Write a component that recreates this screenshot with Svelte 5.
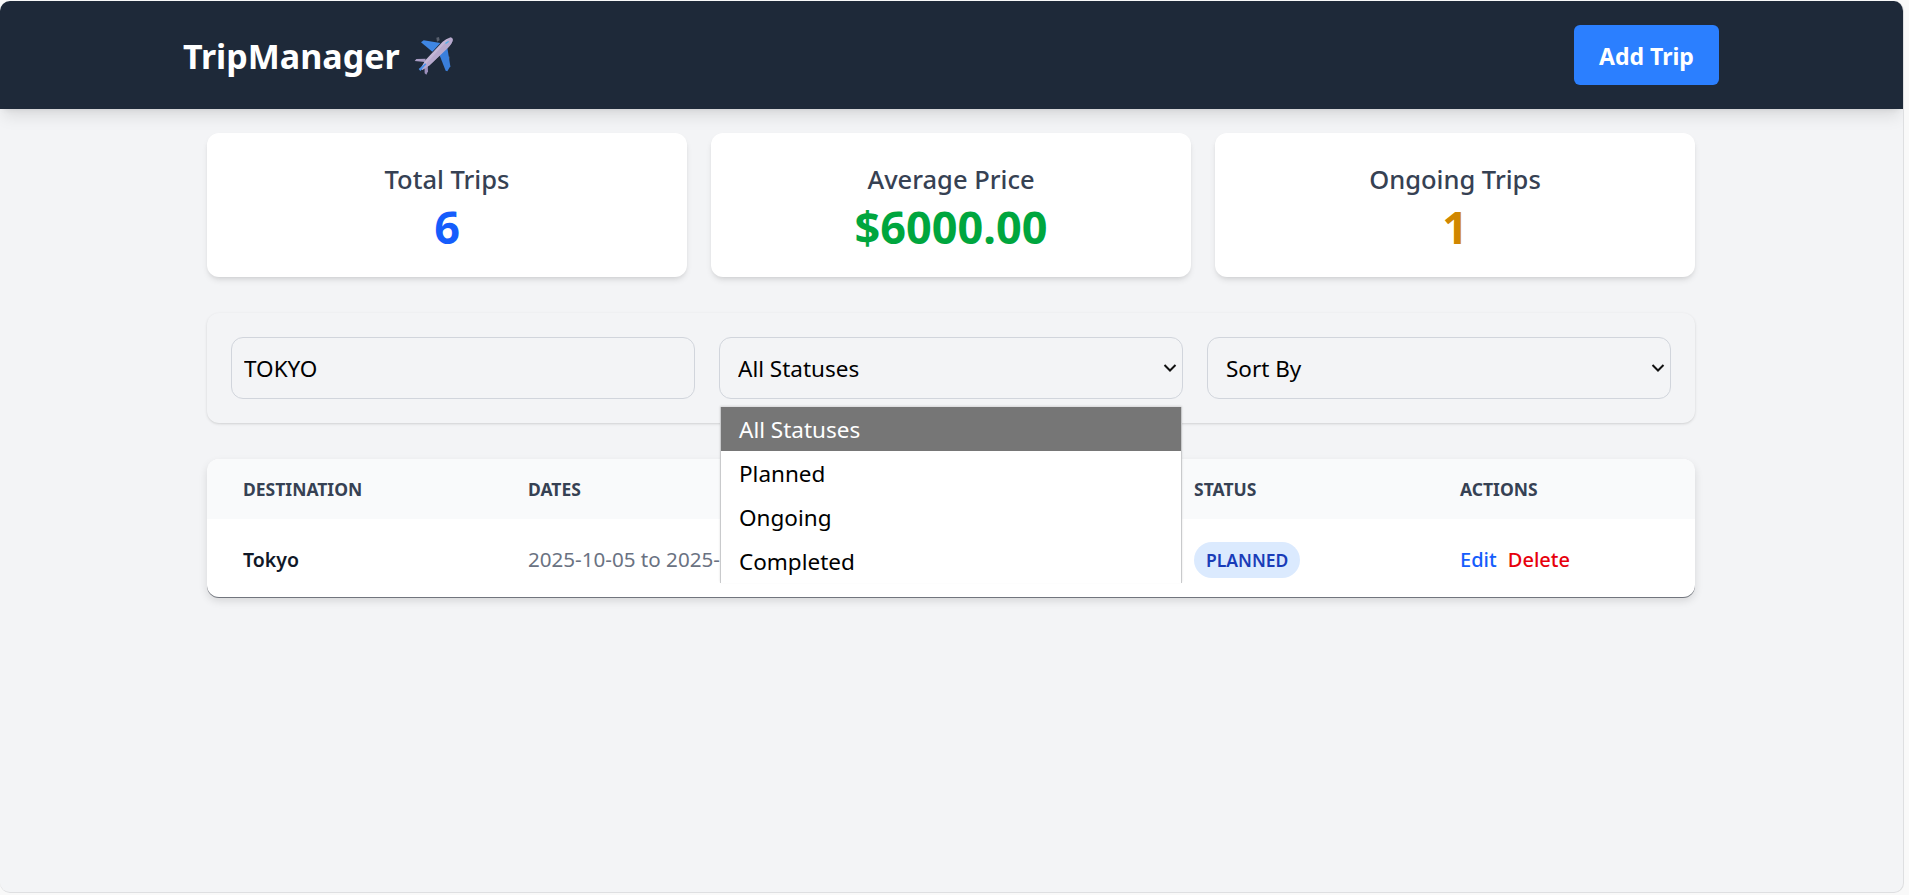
<script>
  const stats = [
    { label: 'Total Trips', value: '6', tone: 'blue' },
    { label: 'Average Price', value: '$6000.00', tone: 'green' },
    { label: 'Ongoing Trips', value: '1', tone: 'amber' }
  ];
  const statusOptions = ['All Statuses', 'Planned', 'Ongoing', 'Completed'];
</script>

<div class="window">
  <header class="topbar">
    <div class="topbar-inner">
      <div class="logo">
        <span class="logo-text">TripManager</span>
        <svg class="plane" viewBox="0 0 144 138" width="48" height="46" aria-hidden="true">
          <path d="M82 14l8-2 2 10-8 4z" fill="#59606e" />
          <path d="M113 70l9 1-1 9-9-2z" fill="#59606e" />
          <path d="M36 28l8-6 50 8-24 26z" fill="#3f86e3" />
          <path d="M90 62l24-24 10 62-9 15-5-2z" fill="#3a7fdc" />
          <path d="M17 84l5-6 28-1-2 10z" fill="#a99cc4" />
          <path d="M46 88l10 1 1 26-5 10-5-4z" fill="#9c8fbb" />
          <path d="M122 14c6-2 11 3 9 9-2 7-7 14-14 21L62 97l-22 14-5-5 14-24L101 26c7-6 14-10 21-12z" fill="#c4b6d6" />
          <path d="M122 14c6-2 11 3 9 9-2 7-7 14-14 21L62 97l-22 14-3-3z" fill="#ad9fc6" opacity="0.55" />
          <path d="M108 30l10-6 2 2-9 7z" fill="#4cb2ee" />
          <path d="M29 108l20-17 3 3-18 20z" fill="#4a90ea" />
        </svg>
      </div>
      <button class="add-btn" type="button">Add Trip</button>
    </div>
  </header>

  <main class="content">
    <section class="stats">
      {#each stats as stat}
        <div class="stat-card">
          <h3>{stat.label}</h3>
          <p class={stat.tone}>{stat.value}</p>
        </div>
      {/each}
    </section>

    <section class="filters">
      <input class="field" type="text" value="TOKYO" />
      <div class="select-wrap">
        <select class="field pick">
          {#each statusOptions as option}
            <option>{option}</option>
          {/each}
        </select>
        <svg class="chevron" viewBox="0 0 14 10" width="14" height="10" aria-hidden="true">
          <path d="M1.5 2l5.5 5.5L12.5 2" fill="none" stroke="#111" stroke-width="2" />
        </svg>
        <ul class="menu">
          {#each statusOptions as option, i}
            <li class:active={i === 0}>{option}</li>
          {/each}
        </ul>
      </div>
      <div class="select-wrap">
        <select class="field pick">
          <option>Sort By</option>
        </select>
        <svg class="chevron" viewBox="0 0 14 10" width="14" height="10" aria-hidden="true">
          <path d="M1.5 2l5.5 5.5L12.5 2" fill="none" stroke="#111" stroke-width="2" />
        </svg>
      </div>
    </section>

    <section class="table-card">
      <table>
        <colgroup>
          <col style="width: 285px" />
          <col style="width: 370px" />
          <col style="width: 296px" />
          <col style="width: 266px" />
          <col />
        </colgroup>
        <thead>
          <tr>
            <th>Destination</th>
            <th>Dates</th>
            <th>Price</th>
            <th>Status</th>
            <th>Actions</th>
          </tr>
        </thead>
        <tbody>
          <tr>
            <td class="dest">Tokyo</td>
            <td class="muted">2025-10-05 to 2025-10-12</td>
            <td class="muted">$6000.00</td>
            <td class="badge-cell"><span class="badge">Planned</span></td>
            <td class="actions">
              <span class="edit">Edit</span>
              <span class="delete">Delete</span>
            </td>
          </tr>
        </tbody>
      </table>
    </section>
  </main>
</div>

<style>
  :global(body) {
    background: #f9f9f9;
    font-family: "Noto Sans", "Open Sans", sans-serif;
  }

  .window {
    width: 1904px;
    height: 892px;
    margin-top: 1px;
    box-sizing: border-box;
    background: #f3f4f6;
    border-right: 1px solid #dedfe1;
    border-bottom: 1px solid #dedfe1;
    border-radius: 10px;
    overflow: hidden;
  }

  .topbar {
    height: 108px;
    background: #1e2939;
    box-shadow: 0 10px 15px -3px rgba(0, 0, 0, 0.1), 0 4px 6px -4px rgba(0, 0, 0, 0.1);
  }

  .topbar-inner {
    width: 1536px;
    height: 100%;
    margin-left: 183px;
    display: flex;
    align-items: center;
    justify-content: space-between;
  }

  .logo {
    display: flex;
    align-items: center;
    gap: 14px;
    color: #fff;
    font-size: 34px;
    font-weight: 700;
  }

  .logo-text {
    padding-top: 2px;
  }

  .plane {
    display: block;
    margin-left: -5px;
    margin-top: 2px;
  }

  .add-btn {
    width: 145px;
    height: 60px;
    padding: 2px 0 0;
    border: none;
    border-radius: 6px;
    background: #2b7fff;
    color: #fff;
    font: inherit;
    font-size: 23px;
    font-weight: 700;
  }

  .content {
    width: 1488px;
    margin-left: 207px;
  }

  .stats {
    display: grid;
    grid-template-columns: repeat(3, 1fr);
    gap: 24px;
    padding-top: 24px;
  }

  .stat-card {
    height: 144px;
    box-sizing: border-box;
    padding-top: 28px;
    background: #fff;
    border-radius: 12px;
    box-shadow: 0 4px 6px -1px rgba(0, 0, 0, 0.1), 0 2px 4px -2px rgba(0, 0, 0, 0.1);
    text-align: center;
  }

  .stat-card h3 {
    margin: 0;
    color: #364153;
    font-size: 25.5px;
    font-weight: 500;
    line-height: 36px;
  }

  .stat-card p {
    margin: 4px 0 0;
    font-size: 45px;
    font-weight: 700;
    line-height: 52px;
  }

  .blue { color: #155dfc; }
  .green { color: #00a63e; }
  .amber { color: #d08700; }

  .filters {
    display: grid;
    grid-template-columns: repeat(3, 1fr);
    gap: 24px;
    margin-top: 36px;
    padding: 24px;
    border-radius: 12px;
    background: #f3f4f6;
    box-shadow: 0 1px 3px 0 rgba(0, 0, 0, 0.12), 0 1px 2px -1px rgba(0, 0, 0, 0.1);
  }

  .select-wrap {
    position: relative;
  }

  .field {
    display: block;
    width: 100%;
    height: 62px;
    box-sizing: border-box;
    padding: 0 12px;
    border: 1px solid #d1d5dc;
    border-radius: 12px;
    background: #f3f4f6;
    color: #000;
    font: inherit;
    font-size: 22.5px;
    outline: none;
  }

  .pick {
    appearance: none;
    padding-left: 18px;
  }

  .chevron {
    position: absolute;
    top: 26px;
    right: 6px;
    pointer-events: none;
  }

  .menu {
    position: absolute;
    z-index: 2;
    top: 70px;
    left: 1px;
    right: 1px;
    margin: 0;
    padding: 0;
    list-style: none;
    background: #fff;
    border-left: 1px solid #c9cacc;
    border-right: 1px solid #c9cacc;
    box-shadow: 0 -1px 2px rgba(0, 0, 0, 0.12);
    font-size: 22.5px;
  }

  .menu li {
    height: 44px;
    padding-left: 18px;
    line-height: 46px;
    color: #000;
  }

  .menu li.active {
    background: #767676;
    color: #fff;
  }

  .table-card {
    margin-top: 36px;
    border-radius: 12px;
    background: #fff;
    overflow: hidden;
    box-shadow: 0 1px 0 #71757d, 0 4px 8px rgba(0, 0, 0, 0.12);
  }

  table {
    width: 100%;
    table-layout: fixed;
    border-collapse: collapse;
  }

  th {
    height: 60px;
    padding: 0 0 0 36px;
    background: #f9fafb;
    color: #364153;
    font-size: 17.5px;
    font-weight: 700;
    text-align: left;
    text-transform: uppercase;
  }

  td {
    box-sizing: border-box;
    height: 78px;
    padding: 2px 0 0 36px;
    font-size: 20px;
    white-space: nowrap;
  }

  .dest {
    color: #101828;
    font-size: 19.5px;
    font-weight: 600;
  }

  .muted {
    color: #6a7282;
    font-size: 20.6px;
  }

  .badge-cell {
    padding-top: 4px;
  }

  .badge {
    display: inline-block;
    padding: 0 12px;
    border-radius: 18px;
    background: #dbeafe;
    color: #193cb8;
    font-size: 17.5px;
    font-weight: 600;
    line-height: 36px;
    text-transform: uppercase;
  }

  .actions {
    font-weight: 500;
  }

  .edit {
    color: #155dfc;
    margin-right: 6px;
  }

  .delete {
    color: #e7000b;
  }
</style>
